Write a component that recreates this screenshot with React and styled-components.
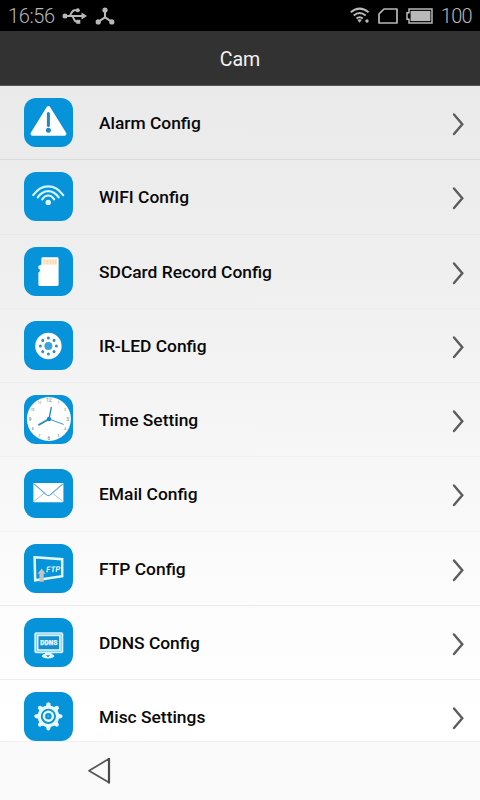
import styled, { createGlobalStyle } from 'styled-components';

const GlobalStyle = createGlobalStyle`
  * {
    box-sizing: border-box;
  }

  body {
    margin: 0;
    font-family: Roboto, "Liberation Sans", sans-serif;
  }
`;

const Screen = styled.div`
  display: flex;
  flex-direction: column;
  width: 480px;
  height: 800px;
  overflow: hidden;
  background: #fafafa;
`;

const StatusBar = styled.header`
  display: flex;
  flex: none;
  align-items: center;
  justify-content: space-between;
  height: 31px;
  padding: 0 8px;
  background: #000;
  color: #b8b8b8;
`;

const StatusGroup = styled.div`
  display: flex;
  align-items: center;
  gap: ${({ $gap }) => $gap}px;

  svg {
    display: block;
  }
`;

const StatusText = styled.span`
  font-size: 20px;
  font-weight: 300;
  line-height: 31px;
  letter-spacing: ${({ $spacing }) => $spacing || 0}px;
  padding-top: 1px;
`;

const TitleBar = styled.div`
  flex: none;
  height: 55px;
  border-bottom: 1px solid #5c5557;
  background: #323232;
  color: #f2f2f2;
  font-size: 19.6px;
  line-height: 57px;
  text-align: center;
`;

const List = styled.ul`
  flex: none;
  height: 655px;
  margin: 0;
  padding: 0;
  overflow: hidden;
  list-style: none;
  background: linear-gradient(#eaeaea, #efefef 28%, #f6f6f6 55%, #fcfcfc 78%, #fff);
`;

const Row = styled.li`
  display: flex;
  align-items: center;
  height: 74.25px;
  padding: 0 16px 0 23.5px;
  border-bottom: 1px solid rgba(0, 0, 0, ${({ $faint }) => ($faint ? 0.025 : 0.07)});
`;

const IconTile = styled.div`
  flex: none;
  width: 49px;
  height: 49px;
  border-radius: 12px;
  overflow: hidden;
  background: #0793da;

  svg {
    display: block;
  }
`;

const Label = styled.span`
  flex: 1;
  padding: 1px 0 0 26.5px;
  color: #080808;
  font-size: 17.4px;
  font-weight: 500;
`;

const Chevron = styled.svg`
  flex: none;
  margin-top: 3px;
`;

const NavBar = styled.nav`
  flex: 1;
  padding: 14px 0 0 86px;
  border-top: 1px solid #f0f0f0;
  background: #fafafa;

  svg {
    display: block;
  }
`;

const AlarmIcon = () => (
  <>
    <path d="M24.4 10 40.4 35.8H8.5Z" fill="#fff" stroke="#fff" strokeWidth="4" strokeLinejoin="round" />
    <path d="M24.4 15.5V27.5" stroke="#2487bd" strokeWidth="3" strokeLinecap="round" />
    <circle cx="24.4" cy="32.3" r="2.5" fill="#2487bd" />
  </>
);

const WifiIcon = () => (
  <g fill="none" stroke="#d2f4ff" strokeWidth="2.2" strokeLinecap="round">
    <path d="M9.2 23.2C17.6 11.4 30.8 11.4 39.2 23.2" />
    <path d="M13.7 25.3C19.6 17 28.8 17 34.7 25.3" />
    <path d="M18.2 27.3C21.6 22.2 26.8 22.2 30.2 27.3" />
    <circle cx="24.2" cy="30.4" r="2.7" fill="#e6faff" stroke="none" />
  </g>
);

const SdCardIcon = () => (
  <>
    <path
      d="M18.8 10.3H33.2Q34.6 10.3 34.6 11.7V37.6Q34.6 39 33.2 39H15.8Q14.4 39 14.4 37.6V25.5L15.8 24.5V22.5L14.4 21.5V19L17.4 17.5V11.7Q17.4 10.3 18.8 10.3Z"
      fill="#fff"
    />
    <path d="M18.7 12.2H33V17.7H18.7Z" fill="#fbe7cc" />
    <path d="M20.8 12.5V17M23.6 12.5V17M26.4 12.5V17M29.2 12.5V17M31.6 12.5V17" stroke="#f3d2a9" strokeWidth=".7" />
  </>
);

const LedIcon = () => (
  <>
    <circle cx="24.4" cy="25" r="13.2" fill="#fff" />
    <circle cx="24.4" cy="25" r="4" fill="#3aa3da" />
    {[0, 45, 90, 135, 180, 225, 270, 315].map((angle) => (
      <circle key={angle} cx="24.4" cy="17" r="1.5" fill="#2f8fc4" transform={`rotate(${angle} 24.4 25)`} />
    ))}
  </>
);

const ClockIcon = () => (
  <>
    <circle cx="24.9" cy="24" r="22" fill="#fff" />
    <g fill="#888" fontWeight="500" textAnchor="middle">
      {[12, 1, 2, 3, 4, 5, 6, 7, 8, 9, 10, 11].map((n) => {
        const a = (n * Math.PI) / 6;
        return (
          <text
            key={n}
            x={24.9 + 18.8 * Math.sin(a)}
            y={25.7 - 18.8 * Math.cos(a)}
            fontSize={n % 3 ? 3.2 : 4.8}
          >
            {n}
          </text>
        );
      })}
    </g>
    <g stroke="#2388c4" strokeLinecap="round">
      <path d="M25 24 15 29.8" strokeWidth="1.8" />
      <path d="M25 24 27.3 12.5" strokeWidth="1.3" />
      <path d="M25 24 39.3 29.3" strokeWidth=".9" />
    </g>
    <circle cx="25" cy="24" r="2.2" fill="#0e8bd0" />
  </>
);

const MailIcon = () => (
  <>
    <rect x="9.4" y="14" width="30" height="19.2" rx=".8" fill="#fff" />
    <path d="M10 14.8 22.6 25.9Q24.4 27.3 26.2 25.9L38.8 14.8" fill="none" stroke="#55a6d3" strokeWidth="1.1" />
    <path d="M10 32.4 20.3 24M38.8 32.4 28.5 24" stroke="#8bc4e4" strokeWidth=".9" />
  </>
);

const FtpIcon = () => (
  <>
    <path d="M10.6 13.3 38.2 15.2V32.2L11.2 36.2Z" fill="none" stroke="#e4f8ff" strokeWidth="2.5" />
    <path d="M17.7 24.6 21.7 29.7H19.7V37.8H15.4V29.7H13.6Z" fill="#c3c3c6" />
    <text
      x="22.3"
      y="28.4"
      fill="#e8faff"
      fontSize="7.8"
      fontWeight="700"
      fontStyle="italic"
      textLength="14"
      transform="rotate(-3 22 28)"
    >
      FTP
    </text>
  </>
);

const DdnsIcon = () => (
  <>
    <rect x="10.3" y="14.2" width="29" height="21" rx="2" fill="#d5f4ff" />
    <rect x="12.4" y="16.1" width="24.8" height="17.2" rx=".5" fill="none" stroke="#5bb6e4" strokeWidth=".7" />
    <rect x="14.5" y="18.2" width="20.6" height="13" fill="#168fd0" />
    <path d="M21 35h6.5v2H21Z" fill="#d5f4ff" />
    <ellipse cx="24" cy="38" rx="6.2" ry="2.4" fill="#e3f8ff" />
    <path d="M21.8 37.2h4.4L24 39.2Z" fill="#168fd0" />
    <text x="16.3" y="27.1" fill="#e6faff" stroke="#e6faff" strokeWidth=".25" fontSize="6.4" fontWeight="900" textLength="17.2">
      DDNS
    </text>
  </>
);

const GearIcon = () => (
  <>
    {[0, 45, 90, 135, 180, 225, 270, 315].map((angle) => (
      <path
        key={angle}
        d="M21.6 15.5 22.7 11.2Q24.4 9.2 26.1 11.2L27.2 15.5Z"
        fill="#e8faff"
        transform={`rotate(${angle} 24.4 24.3)`}
      />
    ))}
    <circle cx="24.4" cy="24.3" r="9.2" fill="#0793da" stroke="#e8faff" strokeWidth="3.2" />
    <circle cx="24.4" cy="24.3" r="4.5" fill="none" stroke="#e8faff" strokeWidth="2.5" />
    <circle cx="24.4" cy="24.3" r="1.2" fill="#3faee4" />
  </>
);

const UsbIcon = () => (
  <svg width="26" height="18" viewBox="0 0 26 18" fill="none" stroke="currentColor" strokeWidth="1.9">
    <path d="M3 9H20M7 9C9.5 9 9 3.2 12.5 3.2H15M9.5 9C12 9 11.5 14.8 15 14.8H16" />
    <circle cx="3" cy="9" r="2.5" fill="currentColor" stroke="none" />
    <path d="M19.5 5.6 25 9 19.5 12.4Z" fill="currentColor" stroke="none" />
    <circle cx="15.8" cy="3.2" r="2" fill="currentColor" stroke="none" />
    <path d="M14.3 12.8h4v4h-4Z" fill="currentColor" stroke="none" />
  </svg>
);

const HubIcon = () => (
  <svg width="20" height="18" viewBox="0 0 20 18" fill="none" stroke="currentColor" strokeWidth="2">
    <path d="M10 3V10.3M3 15 10 10.3 17 15" />
    <g fill="currentColor" stroke="none">
      <circle cx="10" cy="3" r="2.6" />
      <circle cx="3.2" cy="14.9" r="2.6" />
      <circle cx="16.8" cy="14.9" r="2.6" />
    </g>
  </svg>
);

const SignalIcon = () => (
  <svg width="20" height="17" viewBox="0 0 20 17" fill="none" stroke="currentColor" strokeWidth="2">
    <path d="M.8 5.3Q9.6-2 18.6 5.3M3.7 8.5Q9.6 3.4 15.7 8.5M6.5 11.6Q9.6 8.8 12.8 11.6" />
    <path d="M7.3 12.8Q9.6 11.6 11.9 12.8L9.6 15.8Z" fill="currentColor" stroke="none" />
    <circle cx="17" cy="14" r="1.7" fill="currentColor" stroke="none" />
  </svg>
);

const SimIcon = () => (
  <svg width="20" height="16" viewBox="0 0 20 16" fill="none" stroke="currentColor" strokeWidth="1.7">
    <path d="M6 1H19V15H1V6Z" strokeLinejoin="round" />
  </svg>
);

const BatteryIcon = () => (
  <svg width="27" height="16" viewBox="0 0 27 16">
    <path d="M3 1H26V15H3V11.2H1V4.8H3Z" fill="none" stroke="currentColor" strokeWidth="1.5" />
    <path d="M4.6 2.9H24.4V13.1H4.6Z" fill="currentColor" />
  </svg>
);

const items = [
  { label: 'Alarm Config', Icon: AlarmIcon },
  { label: 'WIFI Config', Icon: WifiIcon, faint: true },
  { label: 'SDCard Record Config', Icon: SdCardIcon, faint: true },
  { label: 'IR-LED Config', Icon: LedIcon, faint: true },
  { label: 'Time Setting', Icon: ClockIcon, faint: true },
  { label: 'EMail Config', Icon: MailIcon, faint: true },
  { label: 'FTP Config', Icon: FtpIcon },
  { label: 'DDNS Config', Icon: DdnsIcon },
  { label: 'Misc Settings', Icon: GearIcon },
];

const SettingsRow = ({ label, Icon, faint }) => (
  <Row $faint={faint}>
    <IconTile>
      <svg width="49" height="49" viewBox="0 0 49 49">
        <Icon />
      </svg>
    </IconTile>
    <Label>{label}</Label>
    <Chevron width="12" height="24" viewBox="0 0 12 24">
      <path d="M2 2.4 10.3 12.3 2 22" fill="none" stroke="#5c5c5c" strokeWidth="2.4" strokeLinecap="round" />
    </Chevron>
  </Row>
);

const App = () => {
  return (
    <>
      <GlobalStyle />
      <Screen>
        <StatusBar>
          <StatusGroup $gap={7}>
            <StatusText $spacing={-0.4}>16:56</StatusText>
            <UsbIcon />
            <HubIcon />
          </StatusGroup>
          <StatusGroup $gap={8}>
            <SignalIcon />
            <SimIcon />
            <BatteryIcon />
            <StatusText $spacing={-0.7}>100</StatusText>
          </StatusGroup>
        </StatusBar>
        <TitleBar>Cam</TitleBar>
        <List>
          {items.map((item) => (
            <SettingsRow key={item.label} {...item} />
          ))}
        </List>
        <NavBar>
          <svg width="26" height="30" viewBox="0 0 26 30">
            <path d="M3 14.7 23 2.8V26.6Z" fill="none" stroke="#555" strokeWidth="1.7" strokeLinejoin="round" />
            <path d="M23 2.8V26.6" stroke="#4a4a4a" strokeWidth="2.2" strokeLinecap="round" />
          </svg>
        </NavBar>
      </Screen>
    </>
  );
};

export default App;
